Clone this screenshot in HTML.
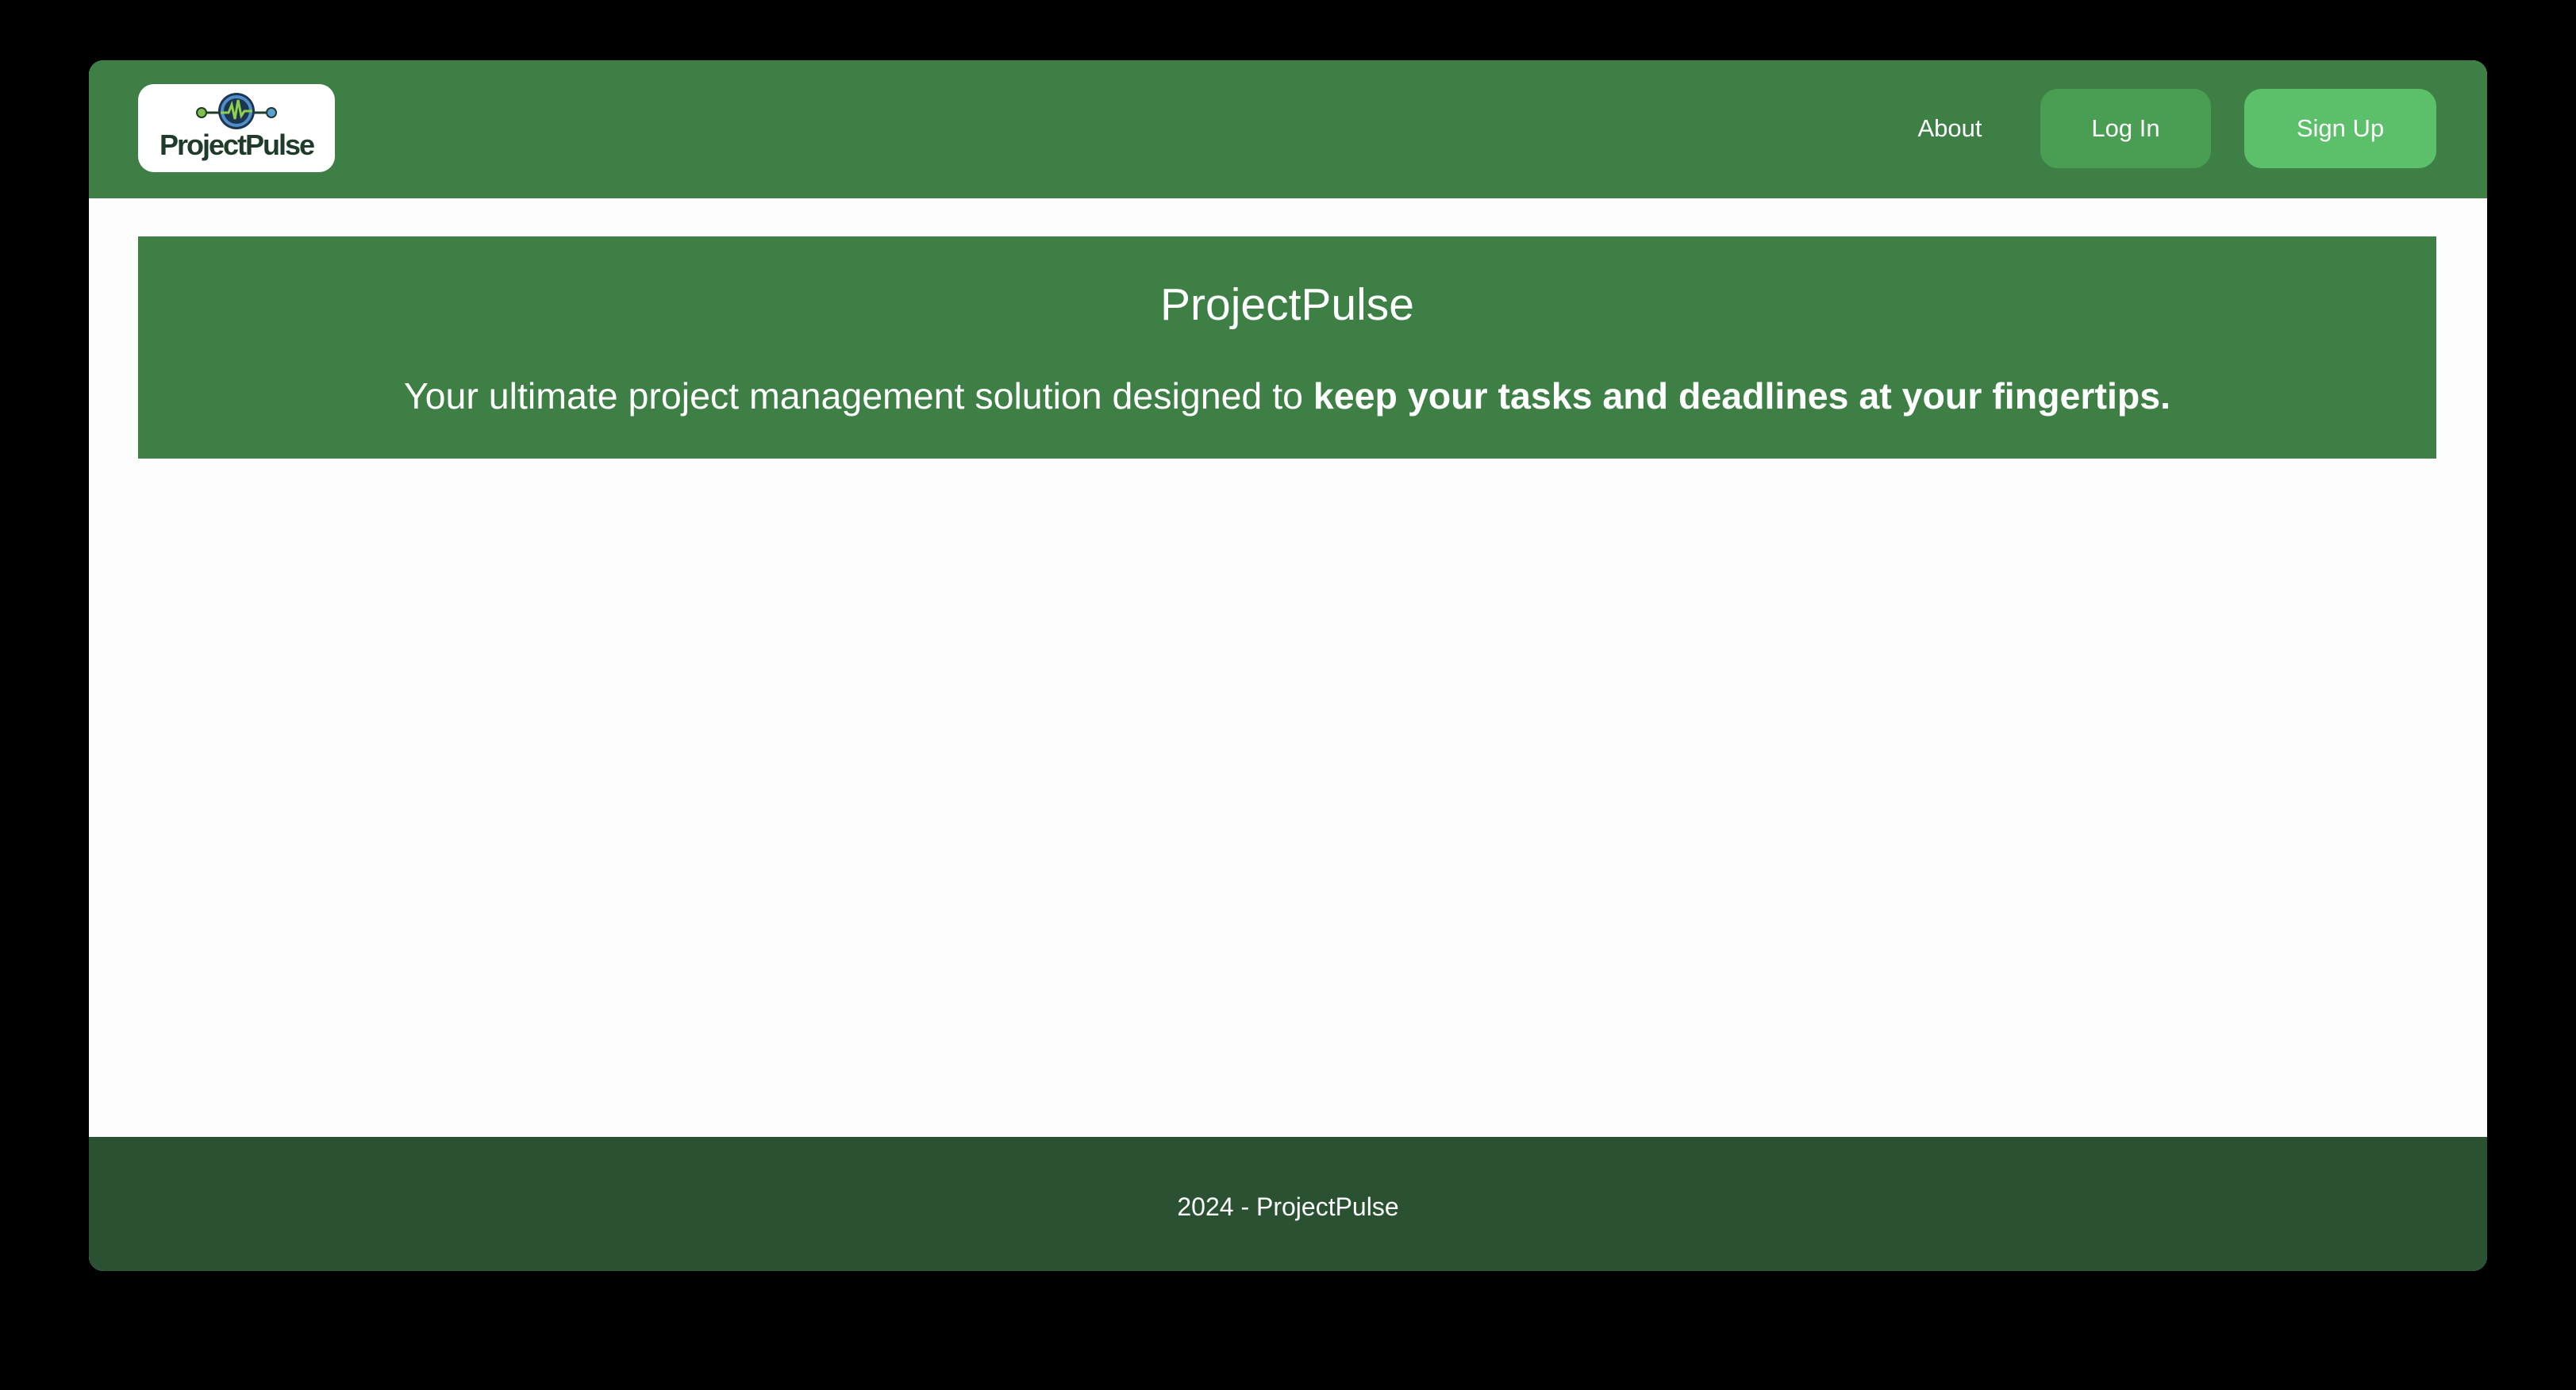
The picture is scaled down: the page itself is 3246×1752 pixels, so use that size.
<!DOCTYPE html>
<html><head><meta charset="utf-8"><style>
html,body{margin:0;padding:0;background:#000;width:3246px;height:1752px;overflow:hidden;font-family:"Liberation Sans",sans-serif}
.win{position:absolute;left:112px;top:76px;width:3022px;height:1526px;background:#fdfdfd;border-radius:18px;overflow:hidden}
.hdr{position:absolute;left:0;top:0;width:100%;height:174px;background:#3e7f46}
.logo{position:absolute;left:62px;top:30px;width:248px;height:111px;background:#fff;border-radius:20px}
.logo .t{position:absolute;left:0;width:100%;top:56px;text-align:center;font-size:36px;font-weight:bold;color:#1f3b2a;letter-spacing:-2px}
.nav{position:absolute;color:#fff;font-size:31px;text-align:center;line-height:100px;border-radius:22px}
.hero{position:absolute;left:62px;top:222px;width:2896px;height:280px;background:#3e7f46;color:#fff;text-align:center}
.hero h1{margin:0;position:absolute;top:53px;width:100%;font-size:57px;font-weight:normal}
.hero p{margin:0;position:absolute;width:100%;font-size:46.5px}
.ftr{position:absolute;left:0;top:1357px;width:100%;height:169px;background:#2a5232;color:#fff;text-align:center;font-size:32px;line-height:176px}
</style></head><body>
<div class="win">
 <div class="hdr">
  <div class="logo">
   <svg width="248" height="60" style="position:absolute;left:0;top:0">
    <line x1="80" y1="36" x2="168" y2="36" stroke="#1f3b2a" stroke-width="3"/>
    <circle cx="80" cy="36" r="6" fill="#7fc04a" stroke="#1f3b2a" stroke-width="2"/>
    <circle cx="168" cy="36" r="6" fill="#5aa0d8" stroke="#1f3b2a" stroke-width="2"/>
    <circle cx="124" cy="34" r="23" fill="#1c3550"/>
    <circle cx="124" cy="34" r="18" fill="none" stroke="#4f8fc8" stroke-width="4"/>
    <polyline points="104,36 114,36 118,26 122,44 126,20 130,40 134,34 144,34" fill="none" stroke="#8ed04a" stroke-width="3"/>
   </svg>
   <div class="t">ProjectPulse</div>
  </div>
  <div class="nav" style="left:2290px;top:36px;width:110px">About</div>
  <div class="nav" style="left:2459px;top:36px;width:215px;background:#4a9e53">Log In</div>
  <div class="nav" style="left:2716px;top:36px;width:242px;background:#5cbf69">Sign Up</div>
 </div>
 <div class="hero">
  <h1>ProjectPulse</h1>
  <p style="top:174px">Your ultimate project management solution designed to <b>keep your tasks and deadlines at your fingertips.</b></p>
 </div>
 <div class="ftr">2024 - ProjectPulse</div>
</div>
</body></html>
